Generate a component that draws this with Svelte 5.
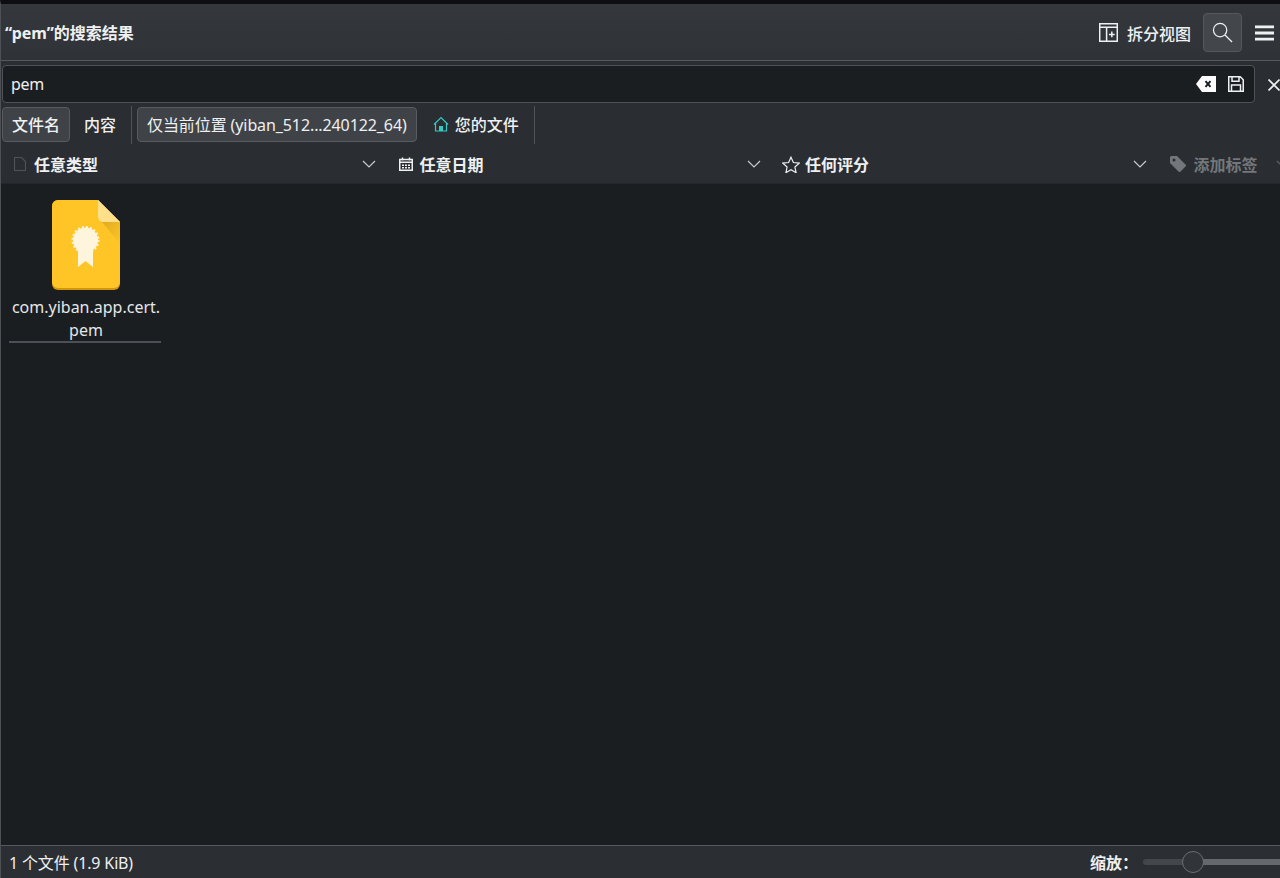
<script lang="ts">
  const filters = [
    { label: '任意类型', icon: 'file' },
    { label: '任意日期', icon: 'calendar' },
    { label: '任何评分', icon: 'star' }
  ];
</script>

<div class="window">
  <header class="titlebar">
    <h1>“pem”的搜索结果</h1>
    <div class="title-actions">
      <button class="split" type="button">
        <svg viewBox="0 0 20 20" aria-hidden="true">
          <path d="M.75.75h18.5v18.5H.75zM.75 4.5h18.5M8 4.500v14.750" />
          <path d="M13.5 9v6M10.5 12h6" />
        </svg>
        <span>拆分视图</span>
      </button>
      <button class="icon-btn active" type="button" aria-label="搜索">
        <svg viewBox="0 0 22 22" aria-hidden="true">
          <circle cx="8.5" cy="8.5" r="7" />
          <path d="M13.6 13.6 21 21" />
        </svg>
      </button>
      <button class="icon-btn menu" type="button" aria-label="菜单">
        <svg viewBox="0 0 20 16" aria-hidden="true">
          <path d="M0 1.5h20M0 8h20M0 14.500h20" />
        </svg>
      </button>
    </div>
  </header>

  <section class="searchbar">
    <div class="search-row">
      <div class="field">
        <span class="query">pem</span>
        <svg class="clear" viewBox="0 0 20 16" aria-hidden="true">
          <path class="solid" d="M6 0h14v16H6L0 8z" />
          <path class="cut" d="M9.5 5.2l5 5.6M14.5 5.2l-5 5.6" />
        </svg>
        <svg class="save" viewBox="0 0 16 16" aria-hidden="true">
          <path d="M.75.75h11.5l3 3v11.5H.75zM4 .75v4.500h7V.75M3.5 15.250V9h9v6.250" />
        </svg>
      </div>
      <button class="close" type="button" aria-label="关闭">
        <svg viewBox="0 0 12 12" aria-hidden="true"><path d="M.5.5l11 11M11.500.5l-11 11" /></svg>
      </button>
    </div>

    <div class="options">
      <button class="chip checked" type="button">文件名</button>
      <button class="chip" type="button">内容</button>
      <span class="sep"></span>
      <button class="chip checked scope" type="button">仅当前位置 (yiban_512...240122_64)</button>
      <button class="chip home" type="button">
        <svg viewBox="0 0 16 16" aria-hidden="true">
          <path class="roof" d="M1 8.500 8 1.500l7 7M2.500 7v8h11V7" />
          <rect x="6" y="10" width="4" height="5" />
        </svg>
        您的文件
      </button>
      <span class="sep"></span>
    </div>

    <div class="filters">
      {#each filters as filter (filter.label)}
        <div class="filter">
          {#if filter.icon === 'file'}
            <svg class="ficon dim" viewBox="0 0 12 14" aria-hidden="true">
              <path d="M.5.5h7l4 4v9H.5z" />
            </svg>
          {:else if filter.icon === 'calendar'}
            <svg class="ficon cal" viewBox="0 0 14 14" aria-hidden="true">
              <path d="M.75 2.500h12.500v10.750H.75zM3.500.5v3M10.500.5v3M.75 5.250h12.500" />
              <path class="dots" d="M3 7.500h2v1.500H3zM6 7.500h2v1.500H6zM9 7.500h2v1.500H9zM3 10h2v1.500H3zM6 10h2v1.500H6zM9 10h2v1.500H9z" />
            </svg>
          {:else}
            <svg class="ficon star" viewBox="0 0 18 17" aria-hidden="true">
              <path d="M9 1.200l2.400 5.300 5.800.6-4.300 3.900 1.200 5.700L9 13.800l-5.100 2.900 1.200-5.700L.8 7.100l5.800-.6z" />
            </svg>
          {/if}
          <span>{filter.label}</span>
          <svg class="chevron" viewBox="0 0 14 8" aria-hidden="true"><path d="M1 1l6 6 6-6" /></svg>
        </div>
      {/each}
      <div class="filter tags">
        <svg class="tag" viewBox="0 0 16 16" aria-hidden="true">
          <path d="M0 1.500A1.500 1.500 0 0 1 1.500 0H7l8.500 8.500a1.500 1.500 0 0 1 0 2.100l-4.900 4.900a1.500 1.500 0 0 1-2.100 0L0 7zM4 5.500a1.500 1.500 0 1 0 0-3 1.500 1.500 0 0 0 0 3z" fill-rule="evenodd" />
        </svg>
        <span>添加标签</span>
        <svg class="chevron" viewBox="0 0 14 8" aria-hidden="true"><path d="M1 1l6 6 6-6" /></svg>
      </div>
    </div>
  </section>

  <main class="files">
    <div class="file">
      <svg class="file-icon" viewBox="0 0 68 90" aria-hidden="true">
        <defs>
          <linearGradient id="fold-fade" x1="0" y1="0" x2="1" y2="1">
            <stop offset="0" stop-color="#d9a521" />
            <stop offset="1" stop-color="#ffc526" />
          </linearGradient>
        </defs>
        <path class="page-edge" d="M6 0h40l22 22v62a6 6 0 0 1-6 6H6a6 6 0 0 1-6-6V6a6 6 0 0 1 6-6z" />
        <path class="page" d="M6 0h40l22 22v60a6 6 0 0 1-6 6H6a6 6 0 0 1-6-6V6a6 6 0 0 1 6-6z" />
        <path d="M46 17l5 5h17v22z" fill="url(#fold-fade)" stroke="none" />
        <path class="fold" d="M46 0l22 22H51a5 5 0 0 1-5-5z" />
        <path class="seal-part" d="M26 44v23l7.500-6 7.500 6V44z" />
        <circle class="seal-part" cx="33.5" cy="40" r="12.5" />
        <circle class="seal-teeth" cx="33.5" cy="40" r="13" />
      </svg>
      <span class="file-name">com.yiban.app.cert.<br />pem</span>
    </div>
  </main>

  <footer class="statusbar">
    <span class="count">1 个文件 (1.9 KiB)</span>
    <div class="zoom">
      <span class="zoom-label">缩放：</span>
      <div class="slider">
        <span class="knob"></span>
      </div>
    </div>
  </footer>
</div>

<style>
  :global(body) {
    margin: 0;
    background: #1b1e20;
    overflow: hidden;
  }

  .window {
    width: 1280px;
    height: 878px;
    box-sizing: border-box;
    border-top: 4px solid #0c0e12;
    border-left: 1px solid #4d5155;
    display: flex;
    flex-direction: column;
    overflow: hidden;
    background: #1b1e20;
    color: #eff0f1;
    font-family: 'Noto Sans', 'Noto Sans CJK SC', sans-serif;
    font-size: 16px;
  }

  button {
    font: inherit;
    color: inherit;
    background: none;
    border: 1px solid transparent;
    padding: 0;
  }

  svg {
    display: block;
    flex: none;
    fill: none;
    stroke: currentColor;
  }

  .titlebar {
    height: 57px;
    flex: none;
    box-sizing: border-box;
    margin-left: -1px;
    padding: 1px 5px 0 5px;
    display: flex;
    align-items: center;
    justify-content: space-between;
    background: linear-gradient(#34383c, #2f3337);
    border-bottom: 1px solid #55595d;
  }

  h1 {
    margin: 0;
    font-size: 16px;
    font-weight: 700;
    line-height: 20px;
  }

  .title-actions {
    display: flex;
    align-items: center;
  }

  .split {
    display: flex;
    align-items: center;
    gap: 9px;
    margin-right: 11px;
    font-weight: 500;
  }

  .split svg {
    width: 19px;
    height: 19px;
    stroke-width: 1.6;
  }

  .icon-btn.active {
    width: 39px;
    height: 39px;
    display: grid;
    place-items: center;
    box-sizing: border-box;
    border-radius: 4px;
    border-color: #54585c;
    background: #43474c;
  }

  .icon-btn.active svg {
    width: 21px;
    height: 21px;
    stroke-width: 1.3;
  }

  .icon-btn.menu {
    margin-left: 12px;
  }

  .icon-btn.menu svg {
    width: 19px;
    height: 16px;
    stroke-width: 3;
  }

  .searchbar {
    flex: none;
    height: 123px;
    box-sizing: border-box;
    padding-top: 4px;
    background: #2a2d32;
    border-bottom: 1px solid #24272a;
    display: flex;
    flex-direction: column;
  }

  .search-row {
    display: flex;
    align-items: center;
    padding-left: 1px;
    height: 38px;
    flex: none;
  }

  .field {
    flex: none;
    width: 1253px;
    height: 38px;
    box-sizing: border-box;
    display: flex;
    align-items: center;
    padding: 0 10px 0 8px;
    background: #1b1e20;
    border: 1px solid #4f5357;
    border-radius: 4px;
  }

  .query {
    flex: 1;
    padding-bottom: 1px;
    letter-spacing: -0.3px;
  }

  .clear {
    width: 20px;
    height: 16px;
    margin-right: 12px;
  }

  .clear .solid {
    fill: #fcfcfc;
    stroke: none;
  }

  .clear .cut {
    stroke: #1b1e20;
    stroke-width: 2;
  }

  .save {
    width: 16px;
    height: 16px;
    stroke-width: 1.5;
  }

  .close {
    margin-left: 12px;
    width: 12px;
    height: 12px;
    flex: none;
  }

  .close svg {
    width: 12px;
    height: 12px;
    stroke-width: 1.6;
  }

  .options {
    flex: none;
    height: 43px;
    display: flex;
    align-items: center;
    padding-left: 1px;
  }

  .chip {
    height: 35px;
    box-sizing: border-box;
    padding: 0 9px 1px;
    border-radius: 4px;
    font-weight: 500;
    display: flex;
    align-items: center;
    white-space: nowrap;
  }

  .chip.checked {
    background: #3f4348;
    border-color: #585c60;
  }

  .chip.scope {
    font-weight: 400;
    margin-right: 7px;
    letter-spacing: -0.1px;
  }

  .chip.home {
    gap: 6px;
    padding: 0 14px 1px 8px;
  }

  .home svg {
    width: 16px;
    height: 16px;
    color: #35c9c4;
    stroke-width: 1.2;
  }

  .home rect {
    fill: currentColor;
    stroke: none;
  }

  .sep {
    flex: none;
    width: 1px;
    height: 38px;
    background: #50545a;
  }

  .options > .chip:nth-child(2) {
    margin: 0 5px 0 4px;
  }

  .options > .sep:nth-child(3) {
    margin-right: 5px;
  }

  .filters {
    flex: 1;
    display: flex;
    align-items: center;
    padding: 0 0 1px 13px;
  }

  .filter {
    flex: none;
    width: 385.5px;
    box-sizing: border-box;
    padding-right: 23px;
    display: flex;
    align-items: center;
    gap: 7px;
    font-weight: 700;
  }

  .filter:first-child {
    width: 384.5px;
    gap: 8px;
  }

  .filter > span {
    flex: 1;
  }

  .ficon {
    width: 14px;
    height: 14px;
    stroke-width: 1.2;
  }

  .ficon.cal {
    stroke-width: 1.5;
  }

  .ficon.dim {
    color: #4e5358;
    width: 12px;
  }

  .ficon .dots {
    fill: currentColor;
    stroke: none;
  }

  .ficon.star {
    width: 18px;
    height: 17px;
    margin-left: -2px;
    margin-right: -2px;
  }

  .chevron {
    width: 14px;
    height: 8px;
    color: #c8cacc;
    stroke-width: 1.2;
  }

  .filter.tags {
    color: #73777a;
    width: 120px;
    padding: 0;
    gap: 8px;
  }

  .tags .chevron {
    color: #62666a;
  }

  .tag {
    width: 16px;
    height: 16px;
    fill: currentColor;
    stroke: none;
  }

  .files {
    flex: 1;
    min-height: 0;
    padding: 16px 0 0 8px;
    display: flex;
    align-items: flex-start;
    background: #1b1e20;
  }

  .file {
    width: 152px;
    box-sizing: border-box;
    padding-left: 2px;
    display: flex;
    flex-direction: column;
    align-items: center;
    border-bottom: 2px solid #4d5155;
  }

  .file-icon {
    width: 68px;
    height: 90px;
    margin-bottom: 6px;
    stroke: none;
  }

  .page-edge { fill: #d2960c; }
  .page { fill: #ffc526; }
  .fold { fill: #ffe08a; }
  .seal-part { fill: #fff5dc; }
  .seal-teeth {
    fill: none;
    stroke: #fff5dc;
    stroke-width: 2;
    stroke-dasharray: 2 2.085;
  }

  .file-name {
    line-height: 23px;
    margin-bottom: -1px;
    text-align: center;
    color: #e6e7e8;
    white-space: nowrap;
  }

  .statusbar {
    flex: none;
    height: 33px;
    box-sizing: border-box;
    margin-left: -1px;
    padding-left: 9px;
    display: flex;
    align-items: center;
    justify-content: space-between;
    background: #2b2e33;
    border-top: 1px solid #55595d;
  }

  .count {
    letter-spacing: -0.15px;
  }

  .zoom {
    display: flex;
    align-items: center;
    width: 190px;
    flex: none;
  }

  .zoom-label {
    font-weight: 700;
    width: 53px;
    flex: none;
  }

  .slider {
    flex: 1;
    height: 6px;
    margin-right: -10px;
    box-sizing: border-box;
    border-radius: 3px;
    background: linear-gradient(90deg, #43474b 0 40px, #65696d 40px);
    display: flex;
    align-items: center;
    padding-left: 39px;
  }

  .knob {
    flex: none;
    width: 22px;
    height: 22px;
    box-sizing: border-box;
    border-radius: 50%;
    border: 1px solid #6a6e72;
    background: #31353a;
  }
</style>
